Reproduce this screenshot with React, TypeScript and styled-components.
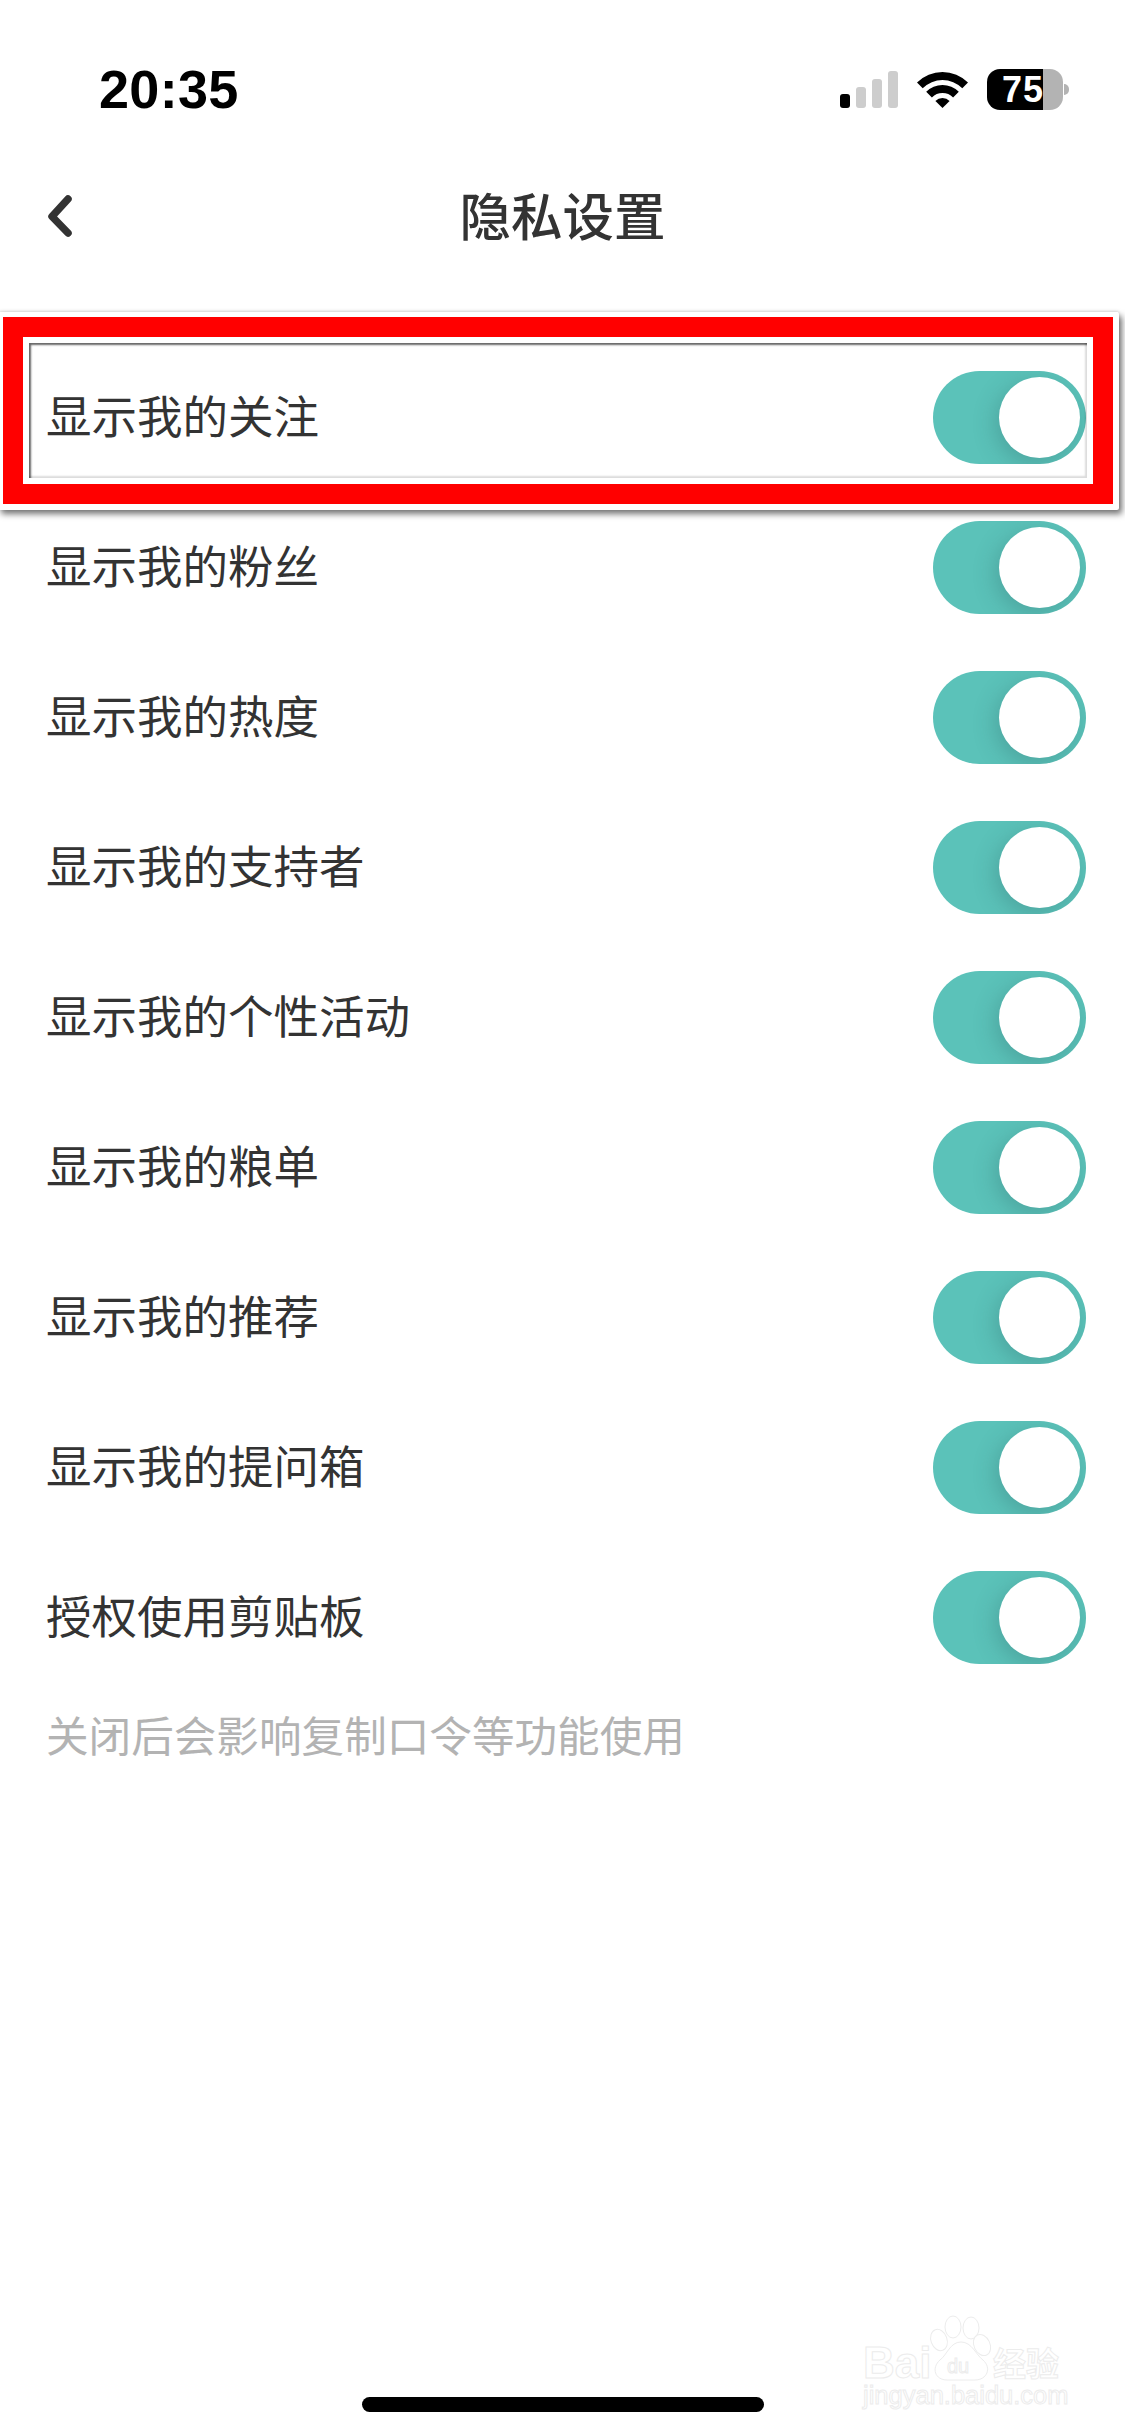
import styled, { createGlobalStyle } from 'styled-components';

const settings = [
  '显示我的关注',
  '显示我的粉丝',
  '显示我的热度',
  '显示我的支持者',
  '显示我的个性活动',
  '显示我的粮单',
  '显示我的推荐',
  '显示我的提问箱',
  '授权使用剪贴板',
];

export default function App() {
  return (
    <>
      <GlobalStyle />
      <Page>
        <StatusBar>
          <Time>20:35</Time>
          <StatusIcons>
            <Signal>
              <SignalBar $height={14} $active />
              <SignalBar $height={21} />
              <SignalBar $height={29} />
              <SignalBar $height={37} />
            </Signal>
            <svg width='51' height='37' viewBox='0 0 51 37'>
              <path d='M0 11.5A36 36 0 0 1 51 11.5L45.3 17.2A28 28 0 0 0 5.7 17.2Z' fill='#000' />
              <path d='M9.2 20.7A23 23 0 0 1 41.8 20.7L36.1 26.4A15 15 0 0 0 14.9 26.4Z' fill='#000' />
              <path d='M18.4 29.9A10 10 0 0 1 32.6 29.9L25.5 37Z' fill='#000' />
            </svg>
            <Battery>
              <BatteryBody>75</BatteryBody>
              <BatteryNub />
            </Battery>
          </StatusIcons>
        </StatusBar>
        <NavBar>
          <BackButton>
            <svg width='30' height='48' viewBox='0 0 30 48'>
              <path d='M23 7L7 24.5L23 41' fill='none' stroke='#333' strokeWidth='7.5' strokeLinecap='round' strokeLinejoin='round' />
            </svg>
          </BackButton>
          <Title>隐私设置</Title>
        </NavBar>
        <SettingsList>
          {settings.map((label) => (
            <SettingRow key={label}>
              <SettingLabel>{label}</SettingLabel>
              <Toggle>
                <Knob />
              </Toggle>
            </SettingRow>
          ))}
        </SettingsList>
        <Hint>关闭后会影响复制口令等功能使用</Hint>
        <HomeIndicator />

        <Highlight>
          <HighlightRed>
            <HighlightInner />
          </HighlightRed>
        </Highlight>

        <Watermark>
          <svg width='210' height='110' viewBox='0 0 210 110'>
            <g fill='#fff' stroke='#ececec' strokeWidth='1'>
              <ellipse cx='79' cy='30' rx='8' ry='11' transform='rotate(-20 79 30)' />
              <ellipse cx='93' cy='17' rx='8' ry='11' />
              <ellipse cx='111' cy='18' rx='8' ry='11' />
              <ellipse cx='122' cy='35' rx='8' ry='11' transform='rotate(-25 122 35)' />
              <path d='M101 32C112 32 116 45 123 50C132 58 127 70 115 70H87C75 70 71 58 80 50C87 45 90 32 101 32Z' />
              <text x='3' y='68' fontFamily='"Liberation Sans", sans-serif' fontWeight='700' fontSize='44'>Bai</text>
              <text x='87' y='63' fontFamily='"Liberation Sans", sans-serif' fontSize='20'>du</text>
              <text x='133' y='66' fontFamily='"Noto Sans CJK SC", sans-serif' fontWeight='700' fontSize='33'>经验</text>
              <text x='3' y='94' fontFamily='"Liberation Sans", sans-serif' fontSize='25.5'>jingyan.baidu.com</text>
            </g>
          </svg>
        </Watermark>
      </Page>
    </>
  );
}

const GlobalStyle = createGlobalStyle`
  html, body {
    margin: 0;
    padding: 0;
    background: #fff;
  }
  * {
    box-sizing: border-box;
  }
`;

const Page = styled.div`
  position: relative;
  width: 1125px;
  height: 2436px;
  display: flex;
  flex-direction: column;
  overflow: hidden;
  background: #fff;
  font-family: 'Noto Sans CJK SC', 'Liberation Sans', sans-serif;
`;

const StatusBar = styled.div`
  height: 178px;
  display: flex;
  align-items: center;
  justify-content: space-between;
  padding: 0 56px 0 99px;
`;

const Time = styled.span`
  font-family: 'Liberation Sans', sans-serif;
  font-size: 54px;
  font-weight: 700;
  letter-spacing: 0.3px;
  color: #000;
`;

const StatusIcons = styled.div`
  display: flex;
  align-items: center;
  gap: 19px;
`;

const Signal = styled.div`
  display: flex;
  align-items: flex-end;
  gap: 6px;
  height: 37px;
`;

const SignalBar = styled.div<{ $height: number; $active?: boolean }>`
  width: 10px;
  height: ${(p) => p.$height}px;
  border-radius: 3px;
  background: ${(p) => (p.$active ? '#000' : '#cdcdcd')};
`;

const Battery = styled.div`
  display: flex;
  align-items: center;
  gap: 1px;
`;

const BatteryBody = styled.div`
  width: 76px;
  height: 41px;
  border-radius: 13px;
  padding-left: 15px;
  background: linear-gradient(to right, #000 56px, #b3b3b3 56px);
  color: #fff;
  font-family: 'Liberation Sans', sans-serif;
  font-size: 36px;
  font-weight: 700;
  line-height: 41px;
  letter-spacing: 1px;
  white-space: nowrap;
`;

const BatteryNub = styled.div`
  width: 5px;
  height: 11px;
  border-radius: 0 6px 6px 0;
  background: #b3b3b3;
`;

const NavBar = styled.div`
  position: relative;
  height: 78px;
  display: flex;
  align-items: center;
  justify-content: center;
`;

const BackButton = styled.div`
  position: absolute;
  left: 45px;
  top: 14px;
  display: flex;
`;

const Title = styled.h1`
  margin: 0 0 6px;
  font-size: 51.5px;
  font-weight: 500;
  line-height: 72px;
  color: #333;
`;

const SettingsList = styled.div`
  margin-top: 87px;
  display: flex;
  flex-direction: column;
`;

const SettingRow = styled.div`
  height: 150px;
  display: flex;
  align-items: flex-start;
  justify-content: space-between;
  padding: 28px 39px 0 46px;
`;

const SettingLabel = styled.span`
  font-size: 45.5px;
  line-height: 87px;
  color: #333;
`;

const Toggle = styled.div`
  position: relative;
  width: 153px;
  height: 93px;
  border-radius: 47px;
  overflow: hidden;
  background: #5bc2b9;
`;

const Knob = styled.div`
  position: absolute;
  top: 6px;
  right: 6px;
  width: 81px;
  height: 81px;
  border-radius: 50%;
  background: #fff;
  box-shadow: -4px 6px 22px rgba(40, 90, 90, 0.28);
`;

const Hint = styled.p`
  margin: 11px 0 0;
  padding-left: 46px;
  font-size: 42.6px;
  line-height: 60px;
  color: #b3b3b3;
`;

const HomeIndicator = styled.div`
  margin: auto auto 24px;
  width: 402px;
  height: 15px;
  border-radius: 8px;
  background: #000;
`;

/* the red annotation sits over the first row, it's not part of the page flow */
const Highlight = styled.div`
  position: absolute;
  left: -2px;
  top: 312px;
  width: 1121px;
  height: 198px;
  padding: 5px 6px 6px 5px;
  background: transparent;
  border-radius: 2px;
  box-shadow: 3px 4px 6px rgba(0, 0, 0, 0.55), 0 -1px 3px rgba(0, 0, 0, 0.12);
  pointer-events: none;
`;

const HighlightRed = styled.div`
  height: 100%;
  border: 20px solid #f00;
  padding: 6px;
  outline: 5px solid #fff;
`;

const HighlightInner = styled.div`
  height: 100%;
  box-shadow:
    inset 2px 2px 2px rgba(0, 0, 0, 0.6),
    inset -2px -2px 2px rgba(0, 0, 0, 0.14);
`;

const Watermark = styled.div`
  position: absolute;
  left: 860px;
  top: 2310px;
  display: flex;
`;
